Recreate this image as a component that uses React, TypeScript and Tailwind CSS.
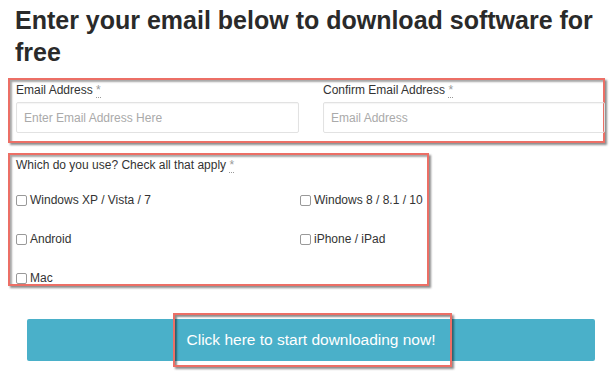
import React from "react";

const Req = () => (
  <span className="text-[#999] border-b border-dotted border-[#999] leading-none">*</span>
);

const Box = ({ label }: { label: string }) => (
  <label className="flex items-center gap-[3px] text-[12px] leading-[14px] text-[#333]">
    <span className="w-[11px] h-[11px] border border-[#999] rounded-[2px] bg-white" />
    {label}
  </label>
);

export default function App() {
  return (
    <div
      className="relative w-[610px] h-[375px] bg-white overflow-hidden"
      style={{ fontFamily: '"Liberation Sans", Arial, sans-serif' }}
    >
      <h1 className="pl-[15px] pr-[10px] pt-[4px] text-[25px] font-bold leading-[32px] text-[#2a2a2a]">
        Enter your email below to download software for free
      </h1>

      <div className="ml-[8px] mt-[10px] w-[597px] h-[65px] border-2 border-[#ec6f66] shadow-[2px_2px_2px_rgba(0,0,0,0.45),inset_2px_2px_2px_rgba(0,0,0,0.35)] grid grid-cols-[283px_282px] gap-x-[24px] pl-[6px] pt-[2px]">
        <div className="flex flex-col">
          <div className="text-[12px] text-[#333] leading-[16px]">
            Email Address <Req />
          </div>
          <div className="mt-[4px] h-[31px] border border-[#e2e2e2] rounded-[2px] flex items-center px-[7px] text-[12px] text-[#aaa] shadow-[inset_0_1px_1px_rgba(0,0,0,0.04)]">
            Enter Email Address Here
          </div>
        </div>
        <div className="flex flex-col">
          <div className="text-[12px] text-[#333] leading-[16px]">
            Confirm Email Address <Req />
          </div>
          <div className="mt-[4px] h-[31px] border border-[#e2e2e2] rounded-[2px] flex items-center px-[7px] text-[12px] text-[#aaa] shadow-[inset_0_1px_1px_rgba(0,0,0,0.04)]">
            Email Address
          </div>
        </div>
      </div>

      <div className="ml-[8px] mt-[10px] w-[421px] h-[133px] border-2 border-[#ec6f66] shadow-[2px_2px_2px_rgba(0,0,0,0.45),inset_2px_2px_2px_rgba(0,0,0,0.35)] pl-[6px] pt-[2px]">
        <div className="text-[12px] text-[#333] leading-[16px]">
          Which do you use? Check all that apply <Req />
        </div>
        <div className="mt-[20px] grid grid-cols-[284px_1fr] gap-y-[25px]">
          <Box label="Windows XP / Vista / 7" />
          <Box label="Windows 8 / 8.1 / 10" />
          <Box label="Android" />
          <Box label="iPhone / iPad" />
          <Box label="Mac" />
        </div>
      </div>

      <div className="relative ml-[27px] mt-[33px] w-[568px] h-[42px] bg-[#4ab0c9] rounded-[2px] flex items-center justify-center">
        <span className="text-white text-[15.5px] leading-none">Click here to start downloading now!</span>
        <div className="absolute left-[146px] top-[-6px] w-[279px] h-[54px] border-2 border-[#ec6f66] shadow-[2px_2px_2px_rgba(0,0,0,0.45),inset_2px_2px_2px_rgba(0,0,0,0.45)]" />
      </div>
    </div>
  );
}
